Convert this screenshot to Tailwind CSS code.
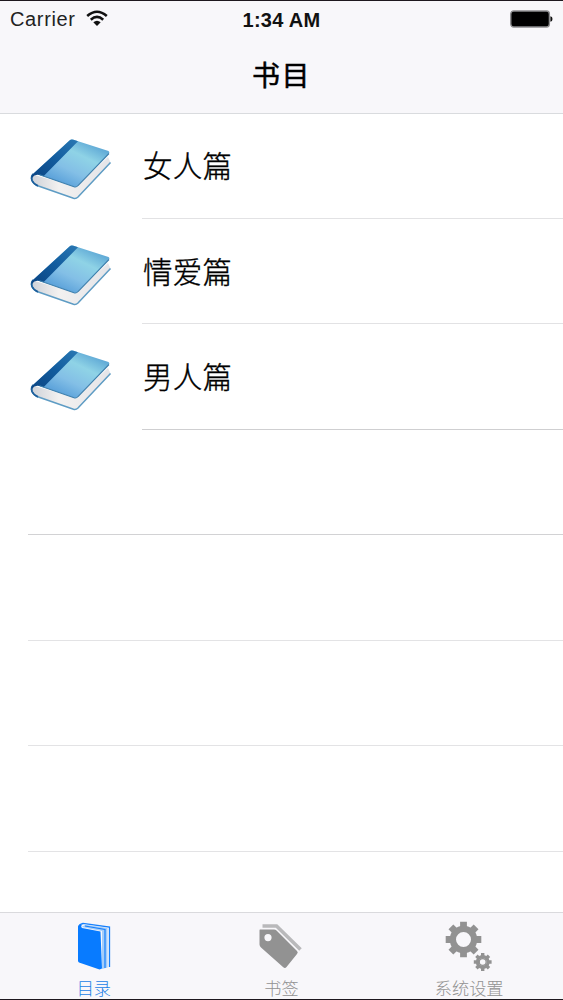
<!DOCTYPE html>
<html lang="zh-CN">
<head>
<meta charset="utf-8">
<title>书目</title>
<script src="https://cdn.jsdelivr.net/npm/@tailwindcss/browser@4"></script>
</head>
<body class="w-[563px] h-[1000px] overflow-hidden bg-white text-black font-['Liberation_Sans','Noto_Sans_CJK_SC',sans-serif]">
<svg class="absolute w-0 h-0" aria-hidden="true">
  <defs>
    <linearGradient id="cover" x1="0.2" y1="0.85" x2="0.8" y2="0.1">
      <stop offset="0" stop-color="#559dd8"/><stop offset=".35" stop-color="#83bfe6"/><stop offset=".7" stop-color="#8fd3e6"/><stop offset="1" stop-color="#5fa9d6"/>
    </linearGradient>
    <linearGradient id="spine" x1="0" y1="1" x2="1" y2="0">
      <stop offset="0" stop-color="#0c4583"/><stop offset=".5" stop-color="#125c9e"/><stop offset="1" stop-color="#2a78b3"/>
    </linearGradient>
    <linearGradient id="pages" x1="0" y1="0" x2="1" y2="0">
      <stop offset="0" stop-color="#cdd1d8"/><stop offset=".35" stop-color="#f3f1f0"/><stop offset="1" stop-color="#e4e4e8"/>
    </linearGradient>
    <symbol id="book" viewBox="0 0 86 66">
      <path d="M5 37.500Q2.500 39 3.500 43Q5 47 9 48.500L45.500 61.500Q48 62 50 60L82.500 25.500L80 20L48 50Z" fill="url(#pages)"/>
      <path d="M5.500 37Q2.500 39.500 4 43.500Q5.500 47 9 48.500L45.500 61.300Q48 62 50 60L82.500 25.500" fill="none" stroke="#5e9cc4" stroke-width="1.500"/>
      <path d="M5.500 37Q2.800 39.500 4 43.500Q5.500 47 10 48.800" fill="none" stroke="#1c5f9c" stroke-width="1.800"/>
      <path d="M5 37L41.500 3.500Q43 2 45.500 2.800L80.500 14Q82 15 81 16.500L50 48.500Q48.500 50.500 46 49.800L12 38Q8 36 5 37Z" fill="url(#cover)"/>
      <path d="M3.800 41Q3 38.500 5.500 36.500L41.500 3.500Q43 2 45.500 2.800L50 4.300L15.500 39.300L11.500 38Q7 36.500 3.800 41Z" fill="url(#spine)"/>
      <path d="M11.500 37.800L46 49.800Q48.500 50.500 50 48.500L81 16.500" fill="none" stroke="#3f80ad" stroke-width="1.100"/>
    </symbol>
  </defs>
</svg>
<div class="flex flex-col h-full">
  <header class="h-[114px] shrink-0 bg-[#f8f7fa] border-t-1 border-t-[#1e181e] border-b border-b-[#d9dbde]">
    <div class="h-9 flex items-center justify-between pl-[10px] pr-[10px]">
      <div class="flex-1 flex items-center gap-[10px]">
        <span class="text-[20px] tracking-[0.65px] text-[#222]">Carrier</span>
        <svg class="w-[22px] h-[17px] -mt-[2px]" viewBox="0 0 22 17" fill="none" stroke="#111" stroke-width="2.600">
          <path d="M1.200 6Q11-2.500 20.800 6"/><path d="M4.800 9.700Q11 4.200 17.200 9.700"/><path d="M11 16L7.300 12.300Q11 9.200 14.700 12.300Z" fill="#111" stroke="none"/>
        </svg>
      </div>
      <span class="text-[20px] font-bold tracking-[0.3px] text-[#111] pt-[2px]">1:34 AM</span>
      <div class="flex-1 flex justify-end">
        <svg class="w-[43px] h-[18px]" viewBox="0 0 44 18"><rect x=".8" y=".8" width="39.500" height="16.400" rx="3" fill="#000" stroke="#8c8c8e" stroke-width="1.400"/><path d="M41.300 6.300Q43.500 6.500 43.500 9T41.300 11.700Z" fill="#111"/></svg>
      </div>
    </div>
    <h1 class="h-[76px] flex items-center justify-center text-[28px] font-normal [-webkit-text-stroke:0.5px_#000] tracking-[1.500px] pt-1">书目</h1>
  </header>
  <main class="flex-1 min-h-0">
    <div class="h-[105.500px] -mt-px flex pl-7">
      <svg class="w-[86px] h-[66px] mt-6 mr-7"><use href="#book"/></svg>
      <div class="flex-1 flex items-center border-b border-[#e2e2e4] text-[29.500px] tracking-[0.3px] font-light [-webkit-text-stroke:0.35px_#000] pt-[4px] pl-px">女人篇</div>
    </div>
    <div class="h-[105.500px] flex pl-7">
      <svg class="w-[86px] h-[66px] mt-6 mr-7"><use href="#book"/></svg>
      <div class="flex-1 flex items-center border-b border-[#e2e2e4] text-[29.500px] tracking-[0.3px] font-light [-webkit-text-stroke:0.35px_#000] pt-[4px] pl-px">情爱篇</div>
    </div>
    <div class="h-[105.500px] flex pl-7">
      <svg class="w-[86px] h-[66px] mt-6 mr-7"><use href="#book"/></svg>
      <div class="flex-1 flex items-center border-b border-[#cfcfd1] text-[29.500px] tracking-[0.3px] font-light [-webkit-text-stroke:0.35px_#000] pt-[4px] pl-px">男人篇</div>
    </div>
    <div class="h-[105.500px] ml-7 border-b border-[#d2d2d4]"></div>
    <div class="h-[105.500px] ml-7 border-b border-[#e3e3e5]"></div>
    <div class="h-[105.500px] ml-7 border-b border-[#e3e3e5]"></div>
    <div class="h-[105.500px] ml-7 border-b border-[#e3e3e5]"></div>
  </main>
  <nav class="h-[88px] shrink-0 grid grid-cols-3 bg-[#f8f7fa] border-t border-t-[#dadadd] border-b border-b-[#1e181e] text-[17.200px] leading-5 text-[#929292] font-light">
    <div class="flex flex-col items-center pt-2 text-[#1a7fe6]">
      <svg class="w-[40px] h-[50px] mb-[8px] shrink-0" viewBox="0 0 40 50">
        <path d="M4.500 6Q5 3.300 9 2.300L35.500 6V46" fill="none" stroke="#1680fc" stroke-width="1.300"/>
        <path d="M7.500 6L11.500 3.700L33.500 7V46.500L28 48V10Z" fill="#a5cdf9"/>
        <path d="M11 5L31 8.500V47" fill="none" stroke="#1680fc" stroke-width="1.200"/>
        <path d="M9 3Q6 5 8 7L26.500 10.500L28 47.500L25.500 48.500L5 41.500Q4 41 4 39.500V6Q5 3.500 9 3Z" fill="#087bff"/>
      </svg>
      <span>目录</span>
    </div>
    <div class="flex flex-col items-center pt-2">
      <svg class="w-[48px] h-[50px] mb-[8px] shrink-0" viewBox="0 0 48 50">
        <path d="M5.500 5H19.500L43.500 28.500" fill="none" stroke="#b9b9bb" stroke-width="3.600"/>
        <path fill-rule="evenodd" d="M2.500 8H16.500Q18 8 19 9L39.500 29.500Q41 31 39.500 32.500L29 45.500Q27.500 47.300 25.500 45.500L3.500 26Q2 24.500 2 23V9Q2 8 2.500 8ZM10.500 12.500A3.600 3.600 0 1 0 10.500 19.700A3.600 3.600 0 1 0 10.500 12.500Z" fill="#929292" transform="translate(.5 .5)"/>
      </svg>
      <span>书签</span>
    </div>
    <div class="flex flex-col items-center pt-2">
      <svg class="w-[50px] h-[50px] mb-[8px] shrink-0" viewBox="0 0 50 50" fill="#929292">
        <defs>
          <g id="gear"><path fill-rule="evenodd" d="M0-13.800A13.800 13.800 0 1 1 0 13.800A13.800 13.800 0 1 1 0-13.800ZM0-7.500A7.500 7.500 0 1 0 0 7.500A7.500 7.500 0 1 0 0-7.500Z"/>
          <path id="tooth" d="M-3.400-17.800H3.400V-12H-3.400ZM-3.400 12H3.400V17.800H-3.400Z"/><use href="#tooth" transform="rotate(45)"/><use href="#tooth" transform="rotate(90)"/><use href="#tooth" transform="rotate(135)"/></g>
        </defs>
        <use href="#gear" transform="translate(19.500 18.500)"/>
        <use href="#gear" transform="translate(38.700 41) scale(.5)"/>
        <circle cx="38.700" cy="41" r="3.400" fill="none" stroke="#929292" stroke-width="1.200"/>
      </svg>
      <span>系统设置</span>
    </div>
  </nav>
</div>
</body>
</html>
